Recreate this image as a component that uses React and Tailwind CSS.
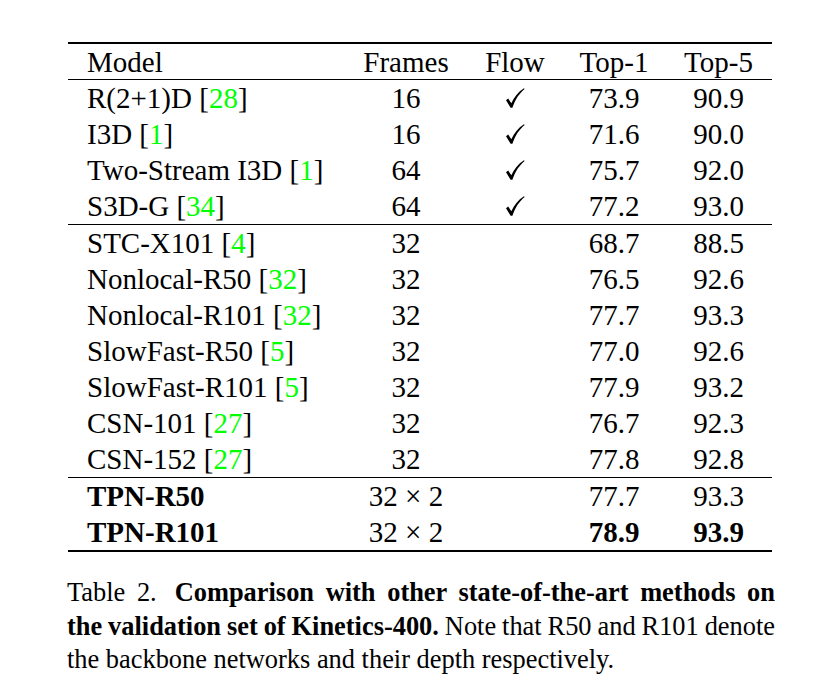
import React from "react";

const G = ({ children }) => <span className="text-[#00ff00]">{children}</span>;

const Check = () => (
  <svg width="20" height="22" viewBox="0 0 20 22" className="inline-block">
    <path
      d="M1 13.2 L3.2 11.6 L6.3 16.2 C9 10.2 13 5 19 1.2 L19.6 2 C14.2 6.6 10.4 12 7.4 20.8 L5.6 20.8 Z"
      fill="#000"
    />
  </svg>
);

const rowsA = [
  [<>R(2+1)D [<G>28</G>]</>, "16", true, "73.9", "90.9"],
  [<>I3D [<G>1</G>]</>, "16", true, "71.6", "90.0"],
  [<>Two-Stream I3D [<G>1</G>]</>, "64", true, "75.7", "92.0"],
  [<>S3D-G [<G>34</G>]</>, "64", true, "77.2", "93.0"],
];
const rowsB = [
  [<>STC-X101 [<G>4</G>]</>, "32", false, "68.7", "88.5"],
  [<>Nonlocal-R50 [<G>32</G>]</>, "32", false, "76.5", "92.6"],
  [<>Nonlocal-R101 [<G>32</G>]</>, "32", false, "77.7", "93.3"],
  [<>SlowFast-R50 [<G>5</G>]</>, "32", false, "77.0", "92.6"],
  [<>SlowFast-R101 [<G>5</G>]</>, "32", false, "77.9", "93.2"],
  [<>CSN-101 [<G>27</G>]</>, "32", false, "76.7", "92.3"],
  [<>CSN-152 [<G>27</G>]</>, "32", false, "77.8", "92.8"],
];

const Row = ({ r, bold = [false, false, false, false, false] }) => (
  <div className="grid grid-cols-[277px_122px_96px_102px_107px] h-[36px] items-center">
    <div className={"pl-[19px] whitespace-nowrap " + (bold[0] ? "font-bold" : "")}>{r[0]}</div>
    <div className="text-center">{r[1]}</div>
    <div className="flex justify-center">{r[2] ? <Check /> : null}</div>
    <div className={"text-center " + (bold[3] ? "font-bold" : "")}>{r[3]}</div>
    <div className={"text-center " + (bold[4] ? "font-bold" : "")}>{r[4]}</div>
  </div>
);

export default function App() {
  return (
    <div
      className="w-[823px] h-[683px] bg-white text-black overflow-hidden"
      style={{ fontFamily: '"Liberation Serif", "Times New Roman", serif' }}
    >
      <div className="pt-[42px] pl-[68px]">
        <div className="w-[704px] text-[29px] leading-[36px]">
          <div className="border-t-2 border-black" />
          <div className="grid grid-cols-[277px_122px_96px_102px_107px] h-[35px] items-center">
            <div className="pl-[19px]">Model</div>
            <div className="text-center">Frames</div>
            <div className="text-center">Flow</div>
            <div className="text-center">Top-1</div>
            <div className="text-center">Top-5</div>
          </div>
          <div className="border-t border-black" />
          {rowsA.map((r, i) => (
            <Row key={"a" + i} r={r} />
          ))}
          <div className="border-t border-black" />
          {rowsB.map((r, i) => (
            <Row key={"b" + i} r={r} />
          ))}
          <div className="border-t border-black" />
          <Row r={["TPN-R50", "32 × 2", false, "77.7", "93.3"]} bold={[true, false, false, false, false]} />
          <Row r={["TPN-R101", "32 × 2", false, "78.9", "93.9"]} bold={[true, false, false, true, true]} />
          <div className="border-t-2 border-black" />
        </div>
      </div>
      <div className="ml-[67px] mt-[24px] w-[708px] text-[26.4px] leading-[33.5px]">
        <div className="text-justify [text-align-last:justify]">
          Table 2.<span className="inline-block w-[18px]" />
          <span className="font-bold">Comparison with other state-of-the-art methods on</span>
        </div>
        <div className="text-justify [text-align-last:justify] [word-spacing:-1.5px]">
          <span className="font-bold">the validation set of Kinetics-400.</span> Note that R50 and R101 denote
        </div>
        <div>the backbone networks and their depth respectively.</div>
      </div>
    </div>
  );
}
